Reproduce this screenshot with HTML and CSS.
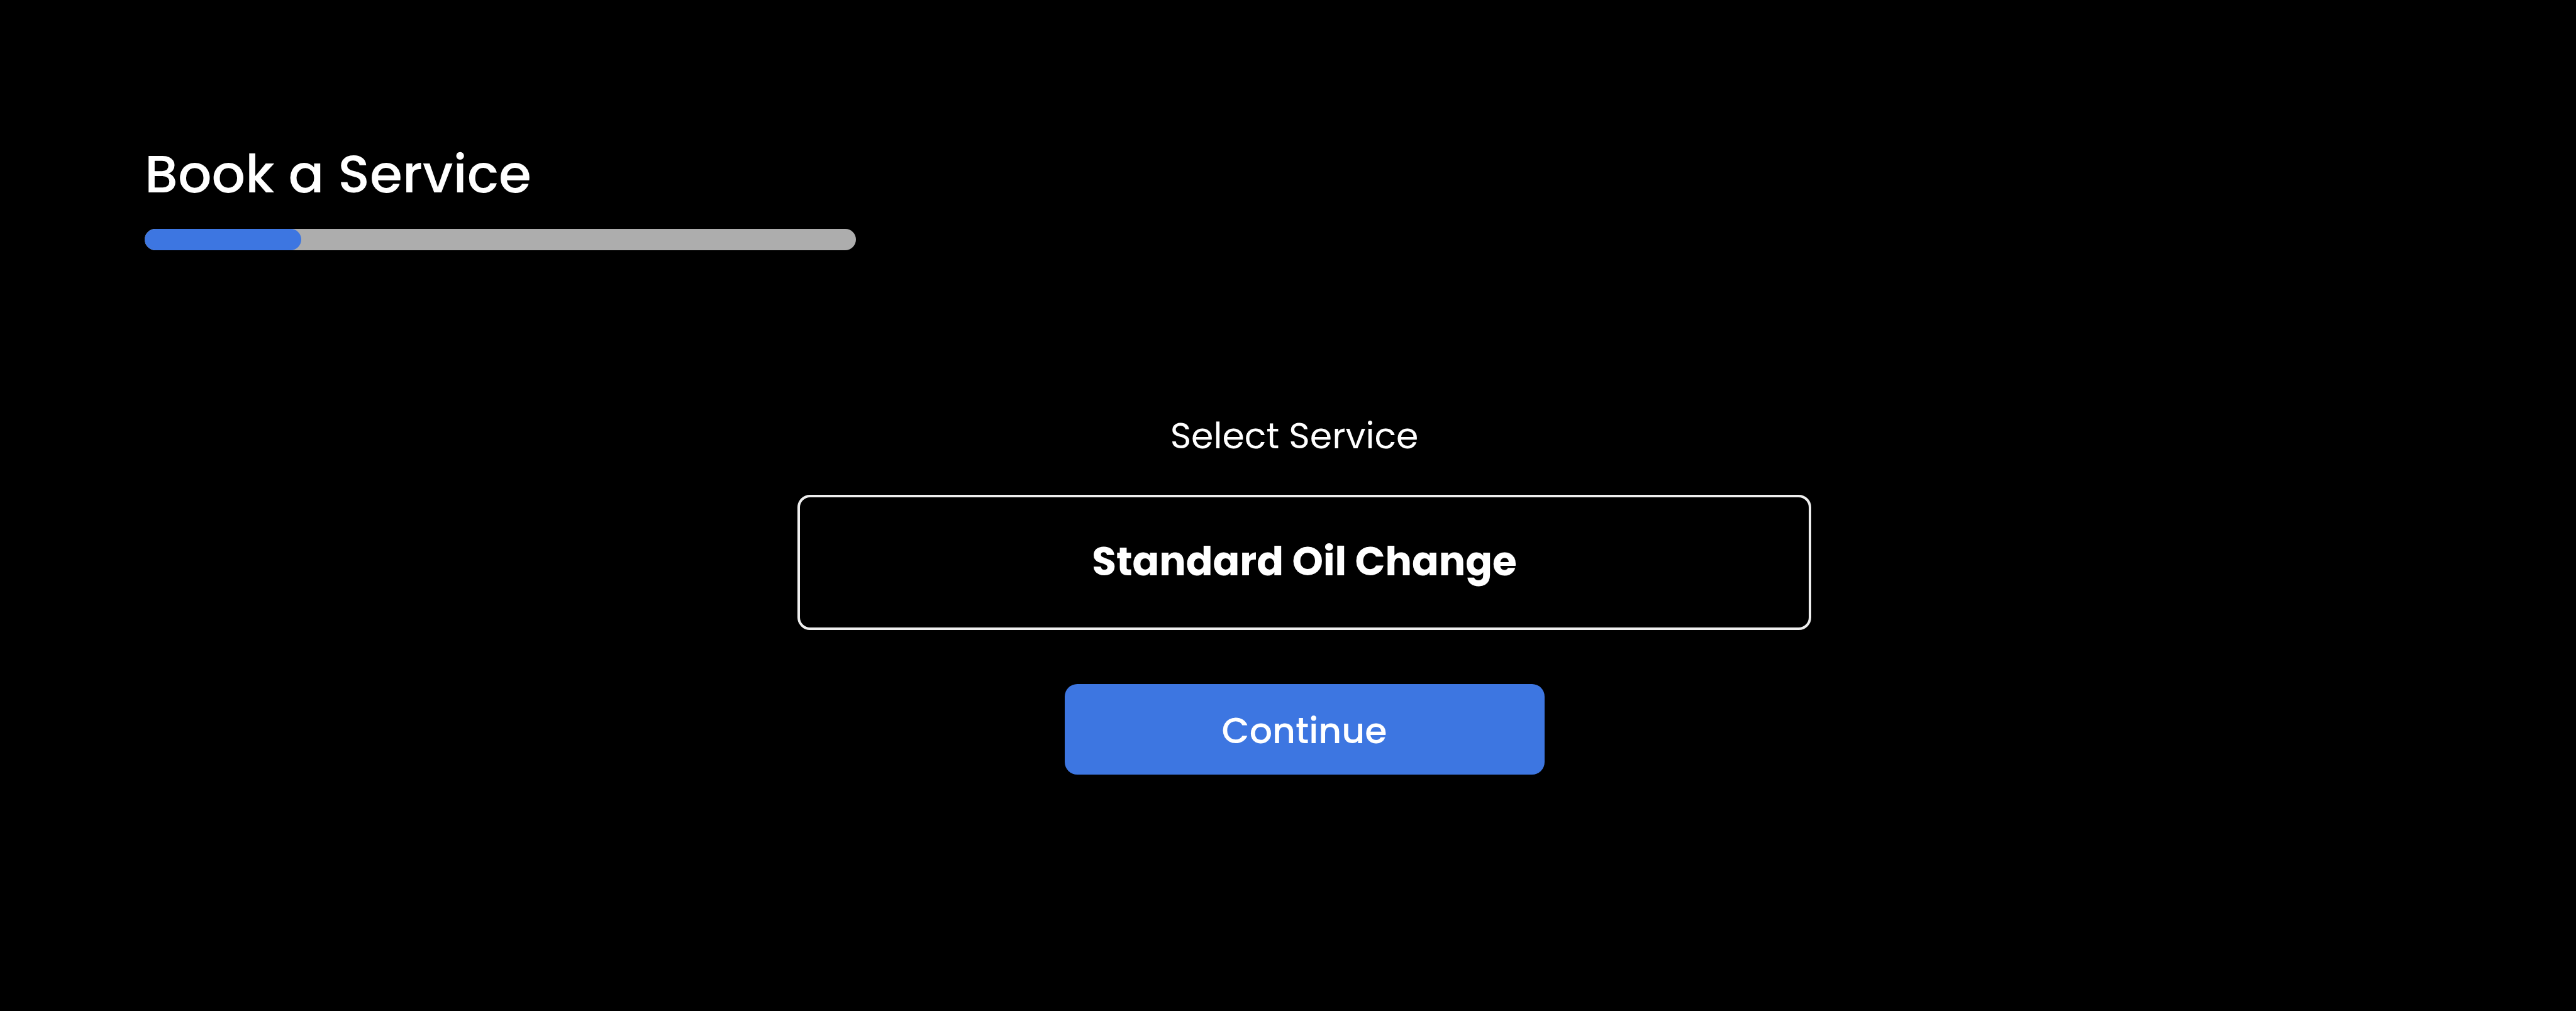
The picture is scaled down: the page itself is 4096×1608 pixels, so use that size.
FILE: index.html
```html
<!DOCTYPE html>
<html lang="en">
<head>
<meta charset="utf-8">
<title>Book a Service</title>
<link rel="stylesheet" href="styles.css">
</head>
<body>
<main class="page">
  <header class="booking-header">
    <h1 class="booking-title" id="booking-title">Book a Service</h1>
    <progress class="booking-progress" value="22" max="100" aria-labelledby="booking-title"></progress>
  </header>
  <form class="booking-form">
    <label class="service-label" for="service">Select Service</label>
    <select class="service-select" id="service" name="service">
      <option>Standard Oil Change</option>
    </select>
    <button class="continue-button" type="button">Continue</button>
  </form>
</main>
</body>
</html>
```
FILE: styles.css
```css
* {
  box-sizing: border-box;
}

body {
  margin: 0;
  background: #000;
  color: #fff;
  font-family: Poppins, Inter, "Open Sans", sans-serif;
}

.page {
  min-height: 100vh;
  padding: 227px 178px 227px 230px;
}

.booking-header {
  display: flex;
  flex-direction: column;
  align-items: flex-start;
  gap: 37px;
}

.booking-title {
  margin: 0;
  font-size: 84px;
  font-weight: 500;
  line-height: 100px;
}

.booking-progress {
  appearance: none;
  display: block;
  width: 1131px;
  max-width: 100%;
  height: 34px;
  border: 0;
  border-radius: 17px;
  background: #adadad;
  overflow: hidden;
}

.booking-progress::-webkit-progress-bar {
  background: #adadad;
}

.booking-progress::-webkit-progress-value {
  border-radius: 17px;
  background: #3d76e1;
}

.booking-form {
  display: flex;
  flex-direction: column;
  align-items: center;
  margin-top: 255px;
}

.service-label {
  padding-right: 32px;
  font-size: 57px;
  font-weight: 400;
  line-height: 80px;
}

.service-select {
  appearance: none;
  width: 1612px;
  max-width: 100%;
  height: 215px;
  margin-top: 54px;
  padding: 0 0 4px;
  border: 4px solid #eee;
  border-radius: 20px;
  background: #000;
  color: #fff;
  font: inherit;
  font-size: 63px;
  font-weight: 700;
  text-align: center;
  text-align-last: center;
}

.continue-button {
  width: 763px;
  max-width: 100%;
  height: 144px;
  margin-top: 86px;
  padding: 4px 0 0;
  border: 0;
  border-radius: 20px;
  background: #3d76e1;
  color: #fff;
  font: inherit;
  font-size: 57px;
  font-weight: 500;
}
```
